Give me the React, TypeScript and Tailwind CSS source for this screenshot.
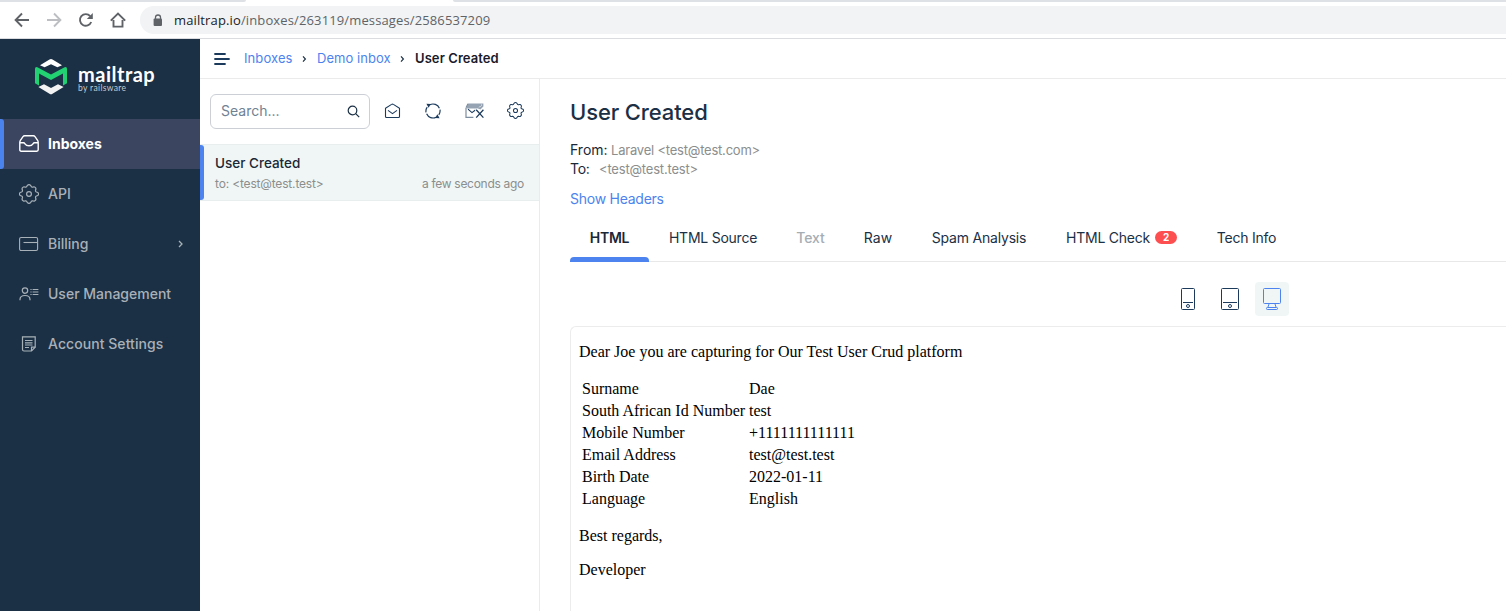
import React from "react";

const gearPath =
  "M8.2 1.6 Q10 -0.4 11.8 1.6 Q12.2 3.4 13.6 3.2 Q14.6 2.6 15.6 3 Q17.4 4 16.8 5.6 Q16 7.4 17.4 8 Q19.6 8.4 19.6 10 Q19.6 11.6 17.4 12 Q16 12.6 16.8 14.4 Q17.4 16 15.6 17 Q14.6 17.4 13.6 16.8 Q12.2 16.6 11.8 18.4 Q10 20.4 8.2 18.4 Q7.8 16.6 6.4 16.8 Q5.4 17.4 4.4 17 Q2.6 16 3.2 14.4 Q4 12.6 2.6 12 Q0.4 11.6 0.4 10 Q0.4 8.4 2.6 8 Q4 7.4 3.2 5.6 Q2.6 4 4.4 3 Q5.4 2.6 6.4 3.2 Q7.8 3.4 8.2 1.6Z";

function Gear({ size }: { size: number }) {
  return (
    <svg width={size} height={size} viewBox="0 0 20 20" fill="none" stroke="currentColor" strokeWidth="1.2">
      <path d={gearPath} />
      <circle cx="10" cy="10" r="2.4" />
    </svg>
  );
}

function Logo() {
  return (
    <svg width="32" height="36" viewBox="0 0 32 36">
      <path d="M5 6.3 L14.5 .5 Q16 -.3 17.5 .5 L27 6.3 L22.4 8.3 L16 5.2 L9.6 8.3Z" fill="#fff" />
      <path d="M2.4 8.2 L16 15.6 L29.6 8.2 Q32 7.4 32 10 V24.2 L28 26.4 V14.4 L16 21 L4 14.4 V26.4 L0 24.2 V10 Q0 7.4 2.4 8.2Z" fill="#22d172" />
      <path d="M3.4 28 L9 25.2 L16 29 L23 25.2 L28.6 28 L17.5 34.8 Q16 35.8 14.5 34.8Z" fill="#f2f2f2" />
    </svg>
  );
}

const inboxIcon = (
  <svg width="20" height="18" viewBox="0 0 20 18" fill="none" stroke="currentColor" strokeWidth="1.4" strokeLinejoin="round">
    <path d="M4 1.6 Q4.6 .8 5.6 .8 H14.4 Q15.4 .8 16 1.6 L18.6 5.4 Q19.2 6.4 19.2 7.4 V14.8 Q19.2 16.2 17.8 16.2 H2.2 Q.8 16.2 .8 14.8 V7.4 Q.8 6.4 1.4 5.4Z" />
    <path d="M1 7.8 H4.4 Q5.4 7.8 6 8.8 Q7.2 10.8 10 10.8 Q12.8 10.8 14 8.8 Q14.6 7.8 15.6 7.8 H19" />
  </svg>
);
const cardIcon = (
  <svg width="20" height="16" viewBox="0 0 20 16" fill="none" stroke="currentColor" strokeWidth="1.1">
    <rect x=".6" y="1.5" width="18" height="13" rx="1.5" />
    <path d="M4.5 6.5 H18.6" />
  </svg>
);
const usersIcon = (
  <svg width="20" height="14" viewBox="0 0 20 14" fill="none" stroke="currentColor" strokeWidth="1.2">
    <circle cx="6" cy="3.6" r="2.7" />
    <path d="M1 13.2 V12.5 Q1 8.5 6 8.5 Q11 8.5 11 12.5 V13.2" />
    <path d="M11.4 2.5 H12.6 M11.4 5 H12.6 M11.4 7.5 H12.6 M13.6 2.5 H19.4 M13.6 5 H19.4 M13.6 7.5 H19.4" />
  </svg>
);
const noteIcon = (
  <svg width="16" height="16" viewBox="0 0 16 16" fill="none" stroke="currentColor" strokeWidth="1.2">
    <path d="M1.5 .8 H14.2 V11.2 L10.5 15 H3 Q1.5 15 1.5 13.5Z" />
    <path d="M14.2 11.2 H10.5 V15 M4 4.5 H11.5 M4 6.8 H11.5 M4 9 H11.5 M4 11.5 H8" />
  </svg>
);

type NavItem = { label: string; icon: React.ReactNode; active?: boolean; expandable?: boolean; text: string };

const navItems: NavItem[] = [
  { label: "Inboxes", icon: inboxIcon, active: true, text: "font-bold" },
  { label: "API", icon: <Gear size={20} />, text: "font-medium" },
  { label: "Billing", icon: cardIcon, expandable: true, text: "font-medium" },
  { label: "User Management", icon: usersIcon, text: "font-medium" },
  { label: "Account Settings", icon: noteIcon, text: "font-medium tracking-[0.06px]" },
];

function BrowserBar() {
  return (
    <header className="h-[39px] shrink-0 border-b border-[#dadce0] bg-white">
      <div className="flex h-[2px]">
        <div className="w-[246px] rounded-br-sm bg-[#dee1e6]" />
        <div className="w-[207px]" />
        <div className="flex-1 rounded-bl-sm bg-[#dee1e6]" />
      </div>
      <div className="flex h-[36px] items-center pl-[14px] text-[#5f6368]">
        <svg width="112" height="16" viewBox="0 0 112 16" fill="none" stroke="currentColor" strokeWidth="1.9">
          <path d="M15 8 H2 M8 1.5 L1.6 8 L8 14.5" />
          <path d="M33 8 H46 M40 1.5 L46.4 8 L40 14.5" stroke="#bcbec1" />
          <path d="M77.2 10 A5.8 5.8 0 1 1 76.2 4.2" />
          <path d="M78.8 1 V7 H72.8Z" fill="currentColor" stroke="none" />
          <path d="M99.5 8 V14.6 H108.5 V8 M96.8 8.6 L104 1.6 L111.2 8.6" />
        </svg>
        <div className="ml-[14px] flex h-[28px] flex-1 items-center rounded-l-full bg-[#f1f3f4] pl-[13px]">
          <svg width="10" height="13" viewBox="0 0 10 13">
            <path d="M2.5 5 V3.3 Q2.5 1 5 1 Q7.5 1 7.5 3.3 V5" fill="none" stroke="#5f6368" strokeWidth="1.3" />
            <rect x=".6" y="4.6" width="8.4" height="7.4" rx="1" fill="#5f6368" />
          </svg>
          <span className="ml-[11px] whitespace-nowrap pt-px font-['Open_Sans',sans-serif] text-[13px] tracking-[0.13px] text-[#5f6368]">
            <span className="text-[#202124]">mailtrap.io</span>/inboxes/263119/messages/2586537209
          </span>
        </div>
      </div>
    </header>
  );
}

function Sidebar() {
  return (
    <aside className="w-[200px] shrink-0 bg-[#1b3045]">
      <div className="flex h-20 items-start pl-[35px] pt-5">
        <Logo />
        <div className="ml-[11px] pt-[3px] font-['Lato',sans-serif] text-white">
          <div className="text-[20px] font-bold leading-[25px] tracking-[0.5px]">mailtrap</div>
          <div className="mt-[-4px] text-[8.5px] leading-[11px] tracking-[0.35px] text-[#c4cad0]">by railsware</div>
        </div>
      </div>
      <nav className="text-[14px]">
        {navItems.map((item) => (
          <a
            key={item.label}
            className={
              item.active
                ? "flex h-[50px] items-center bg-[#3b455f] text-white"
                : "flex h-[50px] items-center text-[#a9b1b8]"
            }
          >
            <span className={item.active ? "h-full w-1 rounded-r-[3px] bg-[#4b83ee]" : "w-1"} />
            <span className="ml-[14px] flex w-[22px] justify-center">{item.icon}</span>
            <span className={"ml-2 flex-1 pb-0.5 " + item.text}>{item.label}</span>
            {item.expandable && (
              <svg className="mr-4" width="7" height="8" viewBox="0 0 7 8" fill="none" stroke="currentColor" strokeWidth="1.3">
                <path d="M2 1 L5 4 L2 7" />
              </svg>
            )}
          </a>
        ))}
      </nav>
    </aside>
  );
}

function Chevron() {
  return (
    <svg className="shrink-0" width="5" height="8" viewBox="0 0 5 8" fill="none" stroke="#1b3045" strokeWidth="1.2">
      <path d="M1 1.4 L3.4 4 L1 6.6" />
    </svg>
  );
}

function Breadcrumbs() {
  return (
    <div className="flex h-10 shrink-0 items-center border-b border-[#ebebeb] pl-[14px] text-[13px] text-[#4c83ee]">
      <svg width="16" height="12" viewBox="0 0 16 12" stroke="#1b3a5c" strokeWidth="1.8" strokeLinecap="round">
        <path d="M1 1 H11 M1 6 H15 M1 11 H11" />
      </svg>
      <a className="ml-[14px] w-[49px] tracking-[0.1px]">Inboxes</a>
      <span className="ml-[9px] mr-[10px]"><Chevron /></span>
      <a className="w-[73px] whitespace-nowrap tracking-[0.05px]">Demo inbox</a>
      <span className="mx-[10px]"><Chevron /></span>
      <span className="font-semibold tracking-[0.08px] text-[#1a1a2b]">User Created</span>
    </div>
  );
}

function MessageList() {
  return (
    <section className="w-[340px] shrink-0 border-r border-[#ebebeb]">
      <div className="flex h-[65px] items-center pl-[10px] text-[#1b3a5c]">
        <div className="flex h-[35px] w-[160px] items-center justify-between rounded-md border border-[#ccd0d6] pl-[10px] pr-[9px] text-[14px] text-[#6f8294]">
          <span className="pb-0.5">Search...</span>
          <svg width="13" height="13" viewBox="0 0 13 13" fill="none" stroke="#1b3045" strokeWidth="1.2">
            <circle cx="5.5" cy="5.5" r="4.3" />
            <path d="M8.7 8.7 L12.2 12.2" />
          </svg>
        </div>
        <div className="flex items-center pb-0.5">
          <svg className="ml-[14px]" width="17" height="16" viewBox="0 0 17 16" fill="none" stroke="currentColor" strokeWidth="1.1" strokeLinejoin="round">
            <path d="M1.5 5.2 L7.6 1.4 Q8.5 .8 9.4 1.4 L15.5 5.2 V13.5 Q15.5 14.5 14.5 14.5 H2.5 Q1.5 14.5 1.5 13.5Z" />
            <path d="M4 7.4 L8.5 10.6 L13 7.4" />
          </svg>
          <svg className="ml-[24px]" width="16" height="16" viewBox="0 0 16 16" fill="none" stroke="currentColor" strokeWidth="1.2">
            <path d="M1 9.4 A7 7 0 0 1 2.2 4.2 M4.8 1.8 A7 7 0 0 1 14.4 5.2 M15 6.6 A7 7 0 0 1 13.8 11.8 M11.2 14.2 A7 7 0 0 1 1.6 10.8" />
            <path d="M1.4 .8 L5.8 1 L3.6 4.8Z M14.6 15.2 L10.2 15 L12.4 11.2Z" fill="currentColor" stroke="none" />
          </svg>
          <svg className="ml-[24px]" width="20" height="16" viewBox="0 0 20 16" fill="none" stroke="currentColor">
            <path d="M3.4 .4 H18.4 V3.4 L15.4 6.6 L13 5.6 H1.4 L2.6 1.2Z" fill="#96a3b2" stroke="none" />
            <path d="M1 5 V14.4 H8.4 M1 4.8 L3 .8" stroke="#7d8ea1" strokeWidth="1.2" />
            <path d="M3 6.2 L7 9.6 L10.4 7" strokeWidth="1.1" />
            <path d="M17 1.6 L13.6 5" stroke="#fff" strokeDasharray="1.2 1" />
            <path d="M11.2 6.4 L18.6 14.8 M18.6 6.4 L11.2 14.8" stroke="#fff" strokeWidth="3" />
            <path d="M11.2 6.8 L18.4 14.6 M18.4 6.8 L11.2 14.6" strokeWidth="1.3" />
          </svg>
          <span className="ml-[22px]"><Gear size={17} /></span>
        </div>
      </div>
      <div className="flex h-[57px] border-y border-[#e8eded] bg-[#f0f6f6]">
        <div className="w-1 rounded-r-[3px] bg-[#4c83ee]" />
        <div className="flex-1 pl-[11px] pr-[15px] pt-2">
          <div className="text-[13.5px] font-medium leading-5 text-[#1a2838]">User Created</div>
          <div className="mt-[3px] flex justify-between text-[12px] leading-4 text-[#8b8e8d]">
            <span className="tracking-[-0.17px]">to: &lt;test@test.test&gt;</span>
            <span className="tracking-[-0.29px]">a few seconds ago</span>
          </div>
        </div>
      </div>
    </section>
  );
}

const tabs = [
  { label: "HTML", cls: "w-[79px] text-[#1a2838] font-semibold tracking-[-0.3px]" },
  { label: "HTML Source", cls: "w-[128px] tracking-[-0.24px]" },
  { label: "Text", cls: "w-[67px] text-[#a6adb3] font-medium tracking-[-0.1px]" },
  { label: "Raw", cls: "w-[68px]" },
  { label: "Spam Analysis", cls: "w-[134px] tracking-[-0.2px]" },
  { label: "HTML Check", cls: "w-[151px] tracking-[-0.22px]", badge: "2" },
  { label: "Tech Info", cls: "w-[99px] tracking-[-0.24px]" },
];

const rows = [
  ["Surname", "Dae"],
  ["South African Id Number", "test"],
  ["Mobile Number", "+1111111111111"],
  ["Email Address", "test@test.test"],
  ["Birth Date", "2022-01-11"],
  ["Language", "English"],
];

function Message() {
  return (
    <main className="flex min-w-0 flex-1 flex-col pl-[30px]">
      <h1 className="mt-[18px] text-[22px] font-medium leading-[30px] tracking-[-0.12px] text-[#1b3045]">User Created</h1>
      <div className="mt-[13px] text-[13px] leading-[19px] text-[#8b8e8d]">
        <div className="flex h-[19px] items-baseline">
          <span className="w-[41px] text-[14px] text-[#1a2838]">From:</span>
          <span className="tracking-[-0.21px]">Laravel &lt;test@test.com&gt;</span>
        </div>
        <div className="flex h-[19px] items-baseline">
          <span className="w-[29px] text-[14px] tracking-[-0.3px] text-[#1a2838]">To:</span>
          <span className="tracking-[-0.19px]">&lt;test@test.test&gt;</span>
        </div>
      </div>
      <a className="mt-[11px] text-[14px] leading-5 tracking-[-0.25px] text-[#4c83ee]">Show Headers</a>
      <div className="mt-[5px] flex h-[48px] shrink-0 border-b border-[#e8e8e8] text-[14px] text-[#1b3045]">
        {tabs.map((tab, i) => (
          <div key={tab.label} className={"flex h-[48px] shrink-0 flex-col justify-between whitespace-nowrap " + tab.cls}>
            <div className="flex items-center justify-center pt-[14px] leading-5">
              {tab.label}
              {tab.badge && (
                <span className="mb-[2px] ml-[5px] flex h-[13px] w-[22px] items-center justify-center rounded-full bg-[#fd4f50] text-[10px] font-bold tracking-normal text-white">
                  {tab.badge}
                </span>
              )}
            </div>
            {i === 0 && <div className="h-[5px] rounded-t-[4px] bg-[#4c83ee]" />}
          </div>
        ))}
      </div>
      <div className="mt-5 flex items-center pl-[610px] text-[#1b3a5c]">
        <svg width="16" height="22" viewBox="0 0 16 22" fill="none" stroke="currentColor">
          <rect x="1.5" y=".5" width="13" height="21" rx="1" />
          <path d="M3 14.5 H13" />
          <circle cx="8" cy="18" r="1.5" />
        </svg>
        <svg className="ml-6" width="20" height="22" viewBox="0 0 20 22" fill="none" stroke="currentColor">
          <rect x="1.5" y=".5" width="17" height="21" rx="1" />
          <path d="M3 14.5 H17" />
          <circle cx="10" cy="18" r="1.5" />
        </svg>
        <span className="ml-[15px] flex h-[34px] w-[34px] items-center justify-center rounded bg-[#f0f6f6]">
          <svg width="20" height="22" viewBox="0 0 20 22" fill="none" stroke="#4c83ee">
            <rect x="1.5" y=".5" width="17" height="15" rx="1" />
            <path d="M7 16 L6 19 M13 16 L14 19" />
            <rect x="4.5" y="19.5" width="11" height="2" rx=".8" />
          </svg>
        </span>
      </div>
      <div className="mt-[10px] flex-1 rounded-tl-md border-l border-t border-[#ececec] pl-2 pt-[16px] font-['Liberation_Serif',serif] text-[16px] leading-[18px] text-black">
        <p>Dear Joe you are capturing for Our Test User Crud platform</p>
        <div className="ml-[3px] mt-[17px] grid grid-cols-[167px_200px] leading-[22px]">
          {rows.map(([k, v]) => (
            <React.Fragment key={k}>
              <span className="whitespace-nowrap">{k}</span>
              <span>{v}</span>
            </React.Fragment>
          ))}
        </div>
        <p className="mt-[17px]">Best regards,</p>
        <p className="mt-4">Developer</p>
      </div>
    </main>
  );
}

export default function App() {
  return (
    <div className="flex h-[611px] w-[1506px] flex-col overflow-hidden bg-white font-['Inter',sans-serif]">
      <BrowserBar />
      <div className="flex min-h-0 flex-1">
        <Sidebar />
        <div className="flex min-w-0 flex-1 flex-col">
          <Breadcrumbs />
          <div className="flex min-h-0 flex-1">
            <MessageList />
            <Message />
          </div>
        </div>
      </div>
    </div>
  );
}
